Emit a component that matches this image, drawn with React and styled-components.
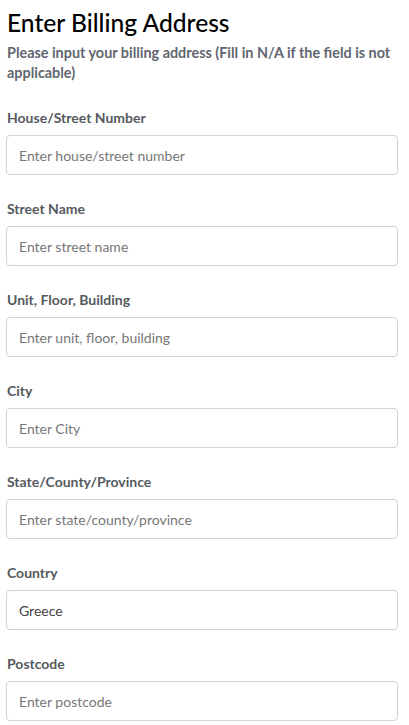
import React from "react";
import styled, { createGlobalStyle } from "styled-components";

const Global = createGlobalStyle`
  * { box-sizing: border-box; }
  body {
    margin: 0;
    background: #fff;
    font-family: Lato, "Noto Sans", sans-serif;
  }
`;

const Page = styled.div`
  padding: 7px 11px 0 6px;
  display: flex;
  flex-direction: column;
`;

const Title = styled.h1`
  margin: 0 0 0 1px;
  font-size: 24.6px;
  font-weight: 500;
  line-height: 32px;
  color: #000;
`;

const Subtitle = styled.p`
  margin: 4px 0 0 1px;
  font-size: 14.4px;
  font-weight: 700;
  line-height: 20px;
  color: #5f6670;
`;

const Form = styled.form`
  display: flex;
  flex-direction: column;
  gap: 24px;
  margin-top: 25px;
`;

const Field = styled.div`
  display: flex;
  flex-direction: column;
  gap: 7px;
`;

const Label = styled.label`
  margin-left: 1px;
  font-size: 14px;
  font-weight: 700;
  line-height: 20px;
  color: #555a60;
`;

const Input = styled.input`
  height: 40px;
  width: 100%;
  padding: 0 12px;
  border: 1px solid #d2d2d2;
  border-radius: 4px;
  font-family: inherit;
  font-size: 14px;
  color: #444;
  background: #fff;
  outline: none;
  &::placeholder { color: #777; }
`;

const fields = [
  { label: "House/Street Number", placeholder: "Enter house/street number" },
  { label: "Street Name", placeholder: "Enter street name" },
  { label: "Unit, Floor, Building", placeholder: "Enter unit, floor, building" },
  { label: "City", placeholder: "Enter City" },
  { label: "State/County/Province", placeholder: "Enter state/county/province" },
  { label: "Country", placeholder: "Enter country", value: "Greece" },
  { label: "Postcode", placeholder: "Enter postcode" },
];

export default function App() {
  return (
    <>
      <Global />
      <Page>
        <Title>Enter Billing Address</Title>
        <Subtitle>
          Please input your billing address (Fill in N/A if the field is not applicable)
        </Subtitle>
        <Form onSubmit={(e) => e.preventDefault()}>
          {fields.map((f) => (
            <Field key={f.label}>
              <Label>{f.label}</Label>
              <Input placeholder={f.placeholder} defaultValue={f.value} />
            </Field>
          ))}
        </Form>
      </Page>
    </>
  );
}
